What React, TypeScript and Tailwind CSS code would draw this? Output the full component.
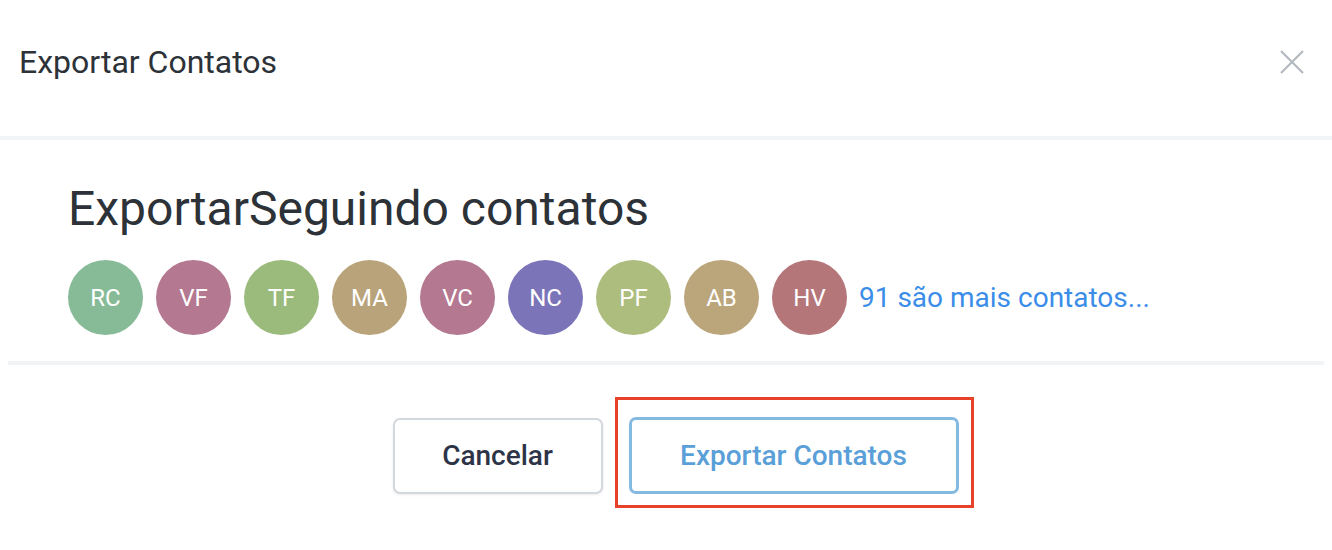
import React from "react";

const contacts = [
  { initials: "RC", color: "bg-[#87bb98]" },
  { initials: "VF", color: "bg-[#b47890]" },
  { initials: "TF", color: "bg-[#9bbb7d]" },
  { initials: "MA", color: "bg-[#b9a37b]" },
  { initials: "VC", color: "bg-[#b47890]" },
  { initials: "NC", color: "bg-[#7b74b8]" },
  { initials: "PF", color: "bg-[#adbd7d]" },
  { initials: "AB", color: "bg-[#bba57b]" },
  { initials: "HV", color: "bg-[#b47679]" },
];

export default function App() {
  return (
    <div className="w-[1332px] h-[550px] bg-white font-['Roboto',sans-serif] text-[#2c3238]">
      <header className="h-[136px] flex items-center justify-between pl-[19px] pr-[28px] pb-[12px]">
        <h2 className="text-[32px] leading-[36px]">Exportar Contatos</h2>
        <button className="text-[#b3babf]" aria-label="Fechar">
          <svg width="24" height="24" viewBox="0 0 24 24" fill="none" stroke="currentColor" strokeWidth="2.2">
            <path d="M1 1L23 23M23 1L1 23" />
          </svg>
        </button>
      </header>
      <div className="h-[4px] bg-[#f2f5f8]" />

      <section className="pt-[45px] px-[68px] pb-[26px]">
        <h1 className="text-[48px] leading-[48px]">ExportarSeguindo contatos</h1>
        <div className="mt-[27px] flex items-center gap-[13px]">
          {contacts.map((c) => (
            <div
              key={c.initials}
              className={`w-[75px] h-[75px] rounded-full flex items-center justify-center text-white text-[24px] ${c.color}`}
            >
              {c.initials}
            </div>
          ))}
          <a className="text-[#3b8de8] text-[28px] -ml-[1px]">91 são mais contatos...</a>
        </div>
      </section>
      <div className="mx-[8px] h-[4px] bg-[#f1f4f7]" />

      <footer className="pt-[52px] flex items-center justify-center gap-[26px] pl-[19px]">
        <button className="w-[210px] h-[76px] rounded-[7px] border-2 border-[#d3d8de] bg-white shadow-[0_1px_3px_rgba(0,0,0,0.08)] text-[28px] font-medium text-[#2e3447]">
          Cancelar
        </button>
        <div className="relative">
          <button className="w-[330px] h-[77px] rounded-[7px] border-[3px] border-[#84b9e1] bg-white text-[28px] font-medium text-[#5a9fd8]">
            Exportar Contatos
          </button>
          <div className="absolute -left-[14px] -right-[15px] -top-[20px] -bottom-[14px] border-[3px] border-[#e8412a] pointer-events-none" />
        </div>
      </footer>
    </div>
  );
}
